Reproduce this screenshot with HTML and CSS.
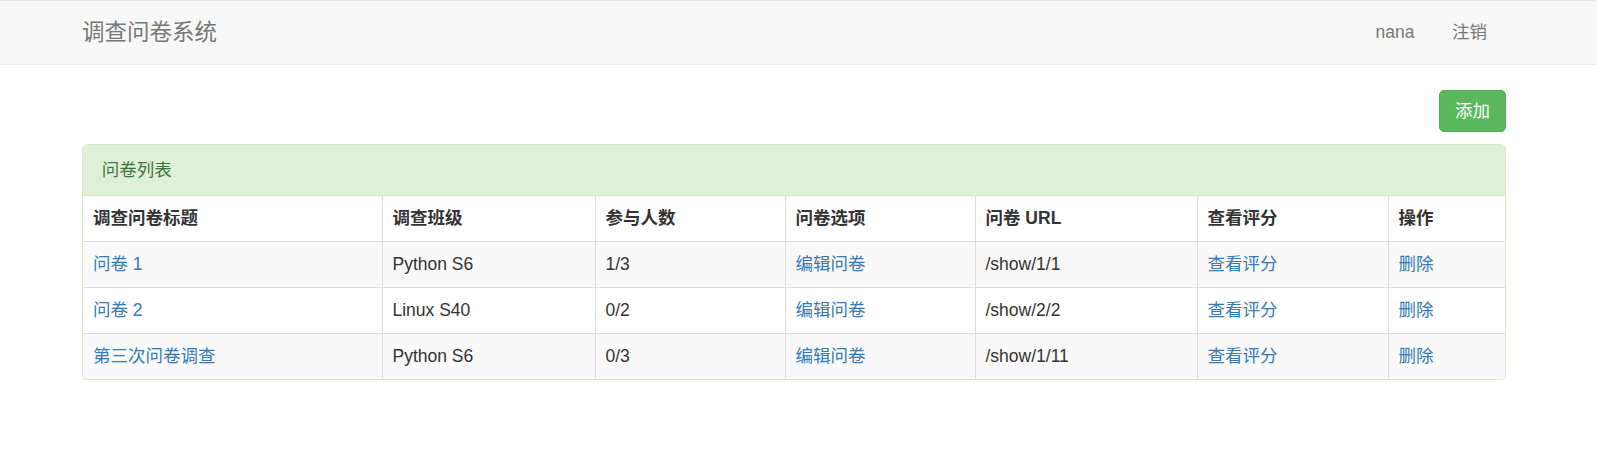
FILE: index.html
```html
<!DOCTYPE html>
<html lang="zh-CN">
<head>
<meta charset="utf-8">
<title>调查问卷系统</title>
<link rel="stylesheet" href="styles.css">
</head>
<body>
<nav class="navbar">
  <div class="container nav-inner">
    <a class="brand" href="#">调查问卷系统</a>
    <ul class="nav-right">
      <li><a href="#">nana</a></li>
      <li><a href="#">注销</a></li>
    </ul>
  </div>
</nav>
<main class="container">
  <div class="toolbar">
    <a class="btn-success" href="#">添加</a>
  </div>
  <div class="panel">
    <div class="panel-heading">问卷列表</div>
    <table class="table">
      <colgroup>
        <col class="c1"><col class="c2"><col class="c3"><col class="c4"><col class="c5"><col class="c6"><col class="c7">
      </colgroup>
      <thead>
        <tr>
          <th>调查问卷标题</th>
          <th>调查班级</th>
          <th>参与人数</th>
          <th>问卷选项</th>
          <th>问卷 URL</th>
          <th>查看评分</th>
          <th>操作</th>
        </tr>
      </thead>
      <tbody>
        <tr class="odd">
          <td><a href="#">问卷 1</a></td>
          <td>Python S6</td>
          <td>1/3</td>
          <td><a href="#">编辑问卷</a></td>
          <td>/show/1/1</td>
          <td><a href="#">查看评分</a></td>
          <td><a href="#">删除</a></td>
        </tr>
        <tr>
          <td><a href="#">问卷 2</a></td>
          <td>Linux S40</td>
          <td>0/2</td>
          <td><a href="#">编辑问卷</a></td>
          <td>/show/2/2</td>
          <td><a href="#">查看评分</a></td>
          <td><a href="#">删除</a></td>
        </tr>
        <tr class="odd">
          <td><a href="#">第三次问卷调查</a></td>
          <td>Python S6</td>
          <td>0/3</td>
          <td><a href="#">编辑问卷</a></td>
          <td>/show/1/11</td>
          <td><a href="#">查看评分</a></td>
          <td><a href="#">删除</a></td>
        </tr>
      </tbody>
    </table>
  </div>
</main>
</body>
</html>
```
FILE: styles.css
```css
* { box-sizing: border-box; }
html, body { margin: 0; padding: 0; background: #fff; }
body {
  font-family: "Liberation Sans", Arial, "Noto Sans CJK SC", sans-serif;
  font-size: 17.5px;
  line-height: 25px;
  color: #333;
}
a { text-decoration: none; color: #337ab7; }

.container {
  width: 1424px;
  margin-left: 82px;
}

.navbar {
  background: #f8f8f8;
  border-top: 1px solid #e7e7e7;
  border-bottom: 1px solid #e7e7e7;
  height: 65px;
}
.nav-inner {
  display: flex;
  align-items: center;
  justify-content: space-between;
  height: 63px;
}
.brand {
  color: #777;
  font-size: 22.5px;
  line-height: 25px;
  padding: 0;
}
.nav-right {
  list-style: none;
  margin: 0;
  padding: 0;
  display: flex;
}
.nav-right a {
  display: block;
  color: #777;
  padding: 18.75px 18.75px;
  line-height: 25px;
}
.nav-right li:last-child a { padding-right: 19px; }

.toolbar {
  display: flex;
  justify-content: flex-end;
  margin-top: 25px;
  margin-bottom: 12px;
}
.btn-success {
  display: inline-block;
  background: #5cb85c;
  border: 1px solid #4cae4c;
  border-radius: 5px;
  color: #fff;
  padding: 7.5px 15px;
  line-height: 25px;
  font-size: 17.5px;
}

.panel {
  border: 1px solid #d6e9c6;
  border-radius: 5px;
  overflow: hidden;
  box-shadow: 0 1px 1px rgba(0,0,0,0.05);
}
.panel-heading {
  background: #dff0d8;
  color: #3c763d;
  padding: 12.5px 18.75px;
  border-bottom: 1px solid #d6e9c6;
}
.table {
  width: 100%;
  border-collapse: collapse;
  table-layout: fixed;
}
.c1 { width: 299px; }
.c2 { width: 213px; }
.c3 { width: 190px; }
.c4 { width: 190px; }
.c5 { width: 222px; }
.c6 { width: 191px; }
.c7 { width: 119px; }
.table th, .table td {
  padding: 10px;
  text-align: left;
  vertical-align: top;
  border: 1px solid #ddd;
  line-height: 25px;
  white-space: nowrap;
}
.table th { font-weight: bold; color: #333; }
.table thead th { border-top: 0; }
.table tr > :first-child { border-left: 0; }
.table tr > :last-child { border-right: 0; }
.table tbody tr:last-child td { border-bottom: 0; }
.table tbody tr.odd { background: #f9f9f9; }
```
